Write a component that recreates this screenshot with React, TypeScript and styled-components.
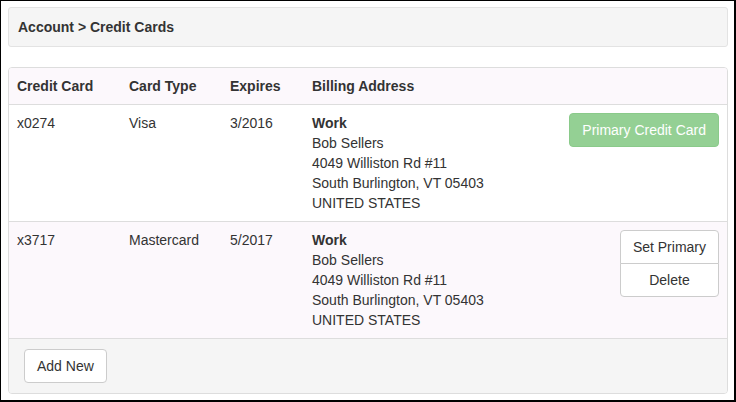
import styled, { createGlobalStyle, css } from "styled-components";

const GlobalStyle = createGlobalStyle`
    html, body {
        margin: 0;
        padding: 0;
        background: #fff;
    }
    body {
        font-family: "Liberation Sans", Arial, Helvetica, sans-serif;
        font-size: 14px;
        line-height: 20px;
        color: #333;
    }
    * {
        box-sizing: border-box;
    }
`;

const cards = [
    {
        number: "x0274",
        type: "Visa",
        expires: "3/2016",
        primary: true
    },
    {
        number: "x3717",
        type: "Mastercard",
        expires: "5/2017",
        primary: false
    }
];

const address = {
    label: "Work",
    lines: [
        "Bob Sellers",
        "4049 Williston Rd #11",
        "South Burlington, VT 05403",
        "UNITED STATES"
    ]
};

const Frame = styled.div`
    width: 736px;
    height: 402px;
    border: 1px solid #000;
    border-right-width: 2px;
    border-bottom-width: 2px;
    padding: 6px 6px 0 7px;
`;

const Crumbs = styled.div`
    background: #f5f5f5;
    border: 1px solid #e3e3e3;
    border-radius: 3px;
    padding: 9px;
    font-weight: bold;
    margin-bottom: 20px;
`;

const Panel = styled.div`
    border: 1px solid #ddd;
    border-radius: 4px;
    overflow: hidden;
`;

const Table = styled.table`
    width: 100%;
    border-collapse: collapse;
    border-spacing: 0;
`;

const HeadRow = styled.tr`
    background: #fcf8fc;
`;

const Th = styled.th<{ $w?: number }>`
    text-align: left;
    padding: 8px;
    font-weight: bold;
    border-bottom: 1px solid #ddd;
    ${(p) => p.$w && css`width: ${p.$w}px;`}
`;

const Row = styled.tr<{ $striped?: boolean }>`
    background: ${(p) => (p.$striped ? "#fcf8fc" : "#fff")};
`;

const Td = styled.td<{ $right?: boolean }>`
    padding: 8px;
    vertical-align: top;
    border-top: 1px solid #ddd;
    text-align: ${(p) => (p.$right ? "right" : "left")};
`;

const Label = styled.div`
    font-weight: bold;
`;

const Button = styled.button<{ $success?: boolean }>`
    display: inline-block;
    font-family: inherit;
    font-size: 14px;
    line-height: 20px;
    padding: 6px 12px;
    border: 1px solid #ccc;
    border-radius: 4px;
    background: #fff;
    color: #333;
    white-space: nowrap;
    cursor: pointer;

    ${(p) =>
        p.$success &&
        css`
            background: #5cb85c;
            border-color: #4cae4c;
            color: #fff;
            opacity: 0.65;
            cursor: not-allowed;
        `}
`;

const ButtonStack = styled.div`
    display: inline-flex;
    flex-direction: column;

    ${Button} {
        width: 100%;
        text-align: center;
    }
    ${Button}:first-child {
        border-bottom-left-radius: 0;
        border-bottom-right-radius: 0;
    }
    ${Button} + ${Button} {
        margin-top: -1px;
        border-top-left-radius: 0;
        border-top-right-radius: 0;
    }
`;

const Footer = styled.div`
    background: #f5f5f5;
    border-top: 1px solid #ddd;
    padding: 10px 15px;
`;

export default function App() {
    return (
        <>
            <GlobalStyle />
            <Frame>
                <Crumbs>Account &gt; Credit Cards</Crumbs>
                <Panel>
                    <Table>
                        <thead>
                            <HeadRow>
                                <Th $w={112}>Credit Card</Th>
                                <Th $w={101}>Card Type</Th>
                                <Th $w={82}>Expires</Th>
                                <Th>Billing Address</Th>
                                <Th />
                            </HeadRow>
                        </thead>
                        <tbody>
                            {cards.map((card, idx) => (
                                <Row key={card.number} $striped={idx % 2 === 1}>
                                    <Td>{card.number}</Td>
                                    <Td>{card.type}</Td>
                                    <Td>{card.expires}</Td>
                                    <Td>
                                        <Label>{address.label}</Label>
                                        {address.lines.map((line) => (
                                            <div key={line}>{line}</div>
                                        ))}
                                    </Td>
                                    <Td $right>
                                        {card.primary ? (
                                            <Button $success disabled>
                                                Primary Credit Card
                                            </Button>
                                        ) : (
                                            <ButtonStack>
                                                <Button>Set Primary</Button>
                                                <Button>Delete</Button>
                                            </ButtonStack>
                                        )}
                                    </Td>
                                </Row>
                            ))}
                        </tbody>
                    </Table>
                    <Footer>
                        <Button>Add New</Button>
                    </Footer>
                </Panel>
            </Frame>
        </>
    );
}
